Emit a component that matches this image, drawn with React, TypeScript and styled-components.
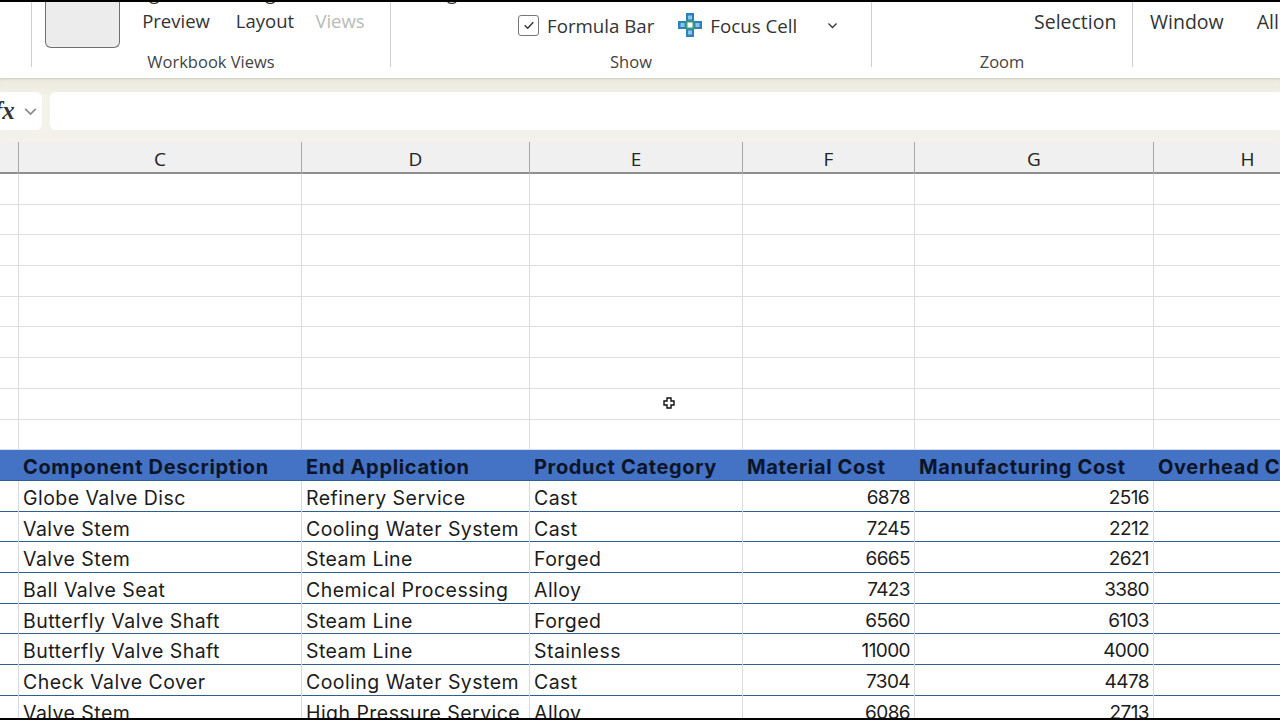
import React from 'react';
import styled, { createGlobalStyle } from 'styled-components';

const Global = createGlobalStyle`
html, body { margin: 0; padding: 0; background: #fff; }
#root { width: 1280px; height: 720px; overflow: hidden; }
`

const COLS = '19px 283px 228px 213px 172px 239px 188px'
const UI_FONT = '"Open Sans", "Noto Sans", sans-serif'
const CELL_FONT = 'Inter, "Noto Sans", sans-serif'

const Page = styled.div`
position: relative;
width: 1280px;
height: 720px;
display: flex;
flex-direction: column;
overflow: hidden;
background: #fff;
`

const EdgeBar = styled.div`
height: 2px;
flex: none;
background: #000;
`

const Ribbon = styled.div`
height: 76px;
flex: none;
display: grid;
grid-template-columns: 32px 359px 481px 261px 1fr;
background: #fff;
overflow: hidden;
font-family: ${UI_FONT};
color: #333;
`

const Group = styled.div<{ $last?: boolean }>`
display: flex;
flex-direction: column;
height: 65px;
border-right: ${(p) => (p.$last ? 'none' : '1px solid #cfcfcf')};
`

const GroupBody = styled.div<{ $left: number }>`
flex: 1;
display: flex;
align-items: flex-start;
padding-left: ${(p) => p.$left}px;
min-width: 0;
`

const GroupLabel = styled.div`
height: 20px;
margin-bottom: -5px;
text-align: center;
font-size: 16.5px;
line-height: 20px;
color: #444;
`

const Tile = styled.div`
width: 73px;
height: 45px;
background: #ececec;
border: 1px solid #6f6f6f;
border-top: none;
border-radius: 0 0 6px 6px;
flex: none;
`

const ViewLabel = styled.div<{ $width: number; $dim?: boolean }>`
width: ${(p) => p.$width}px;
margin-top: -23px;
flex: none;
text-align: center;
font-size: 18.5px;
line-height: 28px;
color: ${(p) => (p.$dim ? '#b9b9b9' : '#333')};
white-space: nowrap;
`

const ShowItem = styled.div<{ $left?: number }>`
display: flex;
align-items: center;
gap: 8px;
height: 28px;
margin-top: 9px;
margin-left: ${(p) => p.$left ?? 0}px;
font-size: 18.7px;
white-space: nowrap;
`

// sits left of the row without taking any room in it
const ClippedLabel = styled.div<{ $offset: number }>`
margin-top: -23px;
margin-left: ${(p) => -p.$offset}px;
margin-right: ${(p) => p.$offset}px;
width: 0;
font-size: 18.5px;
line-height: 28px;
white-space: nowrap;
`

const CheckBox = styled.span`
width: 21px;
height: 21px;
box-sizing: border-box;
border: 1.5px solid #777;
border-radius: 3px;
display: flex;
align-items: center;
justify-content: center;
`

const RightLabel = styled.div<{ $left: number }>`
margin-top: 10px;
margin-left: ${(p) => p.$left}px;
font-size: 19.5px;
line-height: 20px;
white-space: nowrap;
`

const FormulaStrip = styled.div`
height: 64px;
flex: none;
box-sizing: border-box;
padding-top: 14px;
display: flex;
gap: 8px;
background: linear-gradient(#ebe8dc, #f5f3ea 30%, #f3f1e9);
box-shadow: inset 0 2px 2px -1px #cfcdc4;
`

const FxBox = styled.div`
width: 42px;
height: 38px;
box-sizing: border-box;
flex: none;
display: flex;
align-items: center;
justify-content: space-between;
padding-right: 3px;
background: #fff;
border-radius: 0 6px 6px 0;
overflow: hidden;
`

const FxMark = styled.span`
margin-left: -6px;
font-family: "Liberation Serif", serif;
font-style: italic;
font-weight: 700;
font-size: 25px;
color: #333;
`

const FormulaInput = styled.div`
flex: 1;
height: 38px;
background: #fff;
border-radius: 6px 0 0 6px;
`

const HeaderRow = styled.div`
height: 32px;
flex: none;
box-sizing: border-box;
display: grid;
grid-template-columns: ${COLS};
background: #f0f0f0;
border-bottom: 2px solid #8f8f8f;
font-family: ${UI_FONT};
`

const ColHead = styled.div`
border-right: 1px solid #a8a8a8;
text-align: center;
font-size: 19px;
line-height: 35px;
color: #222;
`

const Sheet = styled.div`
flex: 1;
min-height: 0;
overflow: hidden;
font-family: ${CELL_FONT};
`

const Row = styled.div<{ $kind: 'blank' | 'head' | 'data' }>`
height: 30.7px;
box-sizing: border-box;
display: grid;
grid-template-columns: ${COLS};
background: ${(p) => (p.$kind === 'head' ? '#4472c4' : '#fff')};
border-bottom: 1px solid ${(p) => (p.$kind === 'blank' ? '#dedede' : '#2f5f8f')};
`

const Cell = styled.div<{ $kind: 'blank' | 'head' | 'data'; $num?: boolean }>`
box-sizing: border-box;
padding: 2px 4px 0 4px;
border-right: ${(p) => (p.$kind === 'head' ? 'none' : p.$kind === 'blank' ? '1px solid #dcdcdc' : '1px solid #d4dbe6')};
font-size: ${(p) => (p.$num ? '19px' : p.$kind === 'head' ? '20px' : '19.5px')};
letter-spacing: ${(p) => (p.$num ? '-0.6px' : p.$kind === 'head' ? '0.65px' : '0.45px')};
font-weight: ${(p) => (p.$kind === 'head' ? 700 : 400)};
line-height: 30px;
text-align: ${(p) => (p.$num ? 'right' : 'left')};
color: ${(p) => (p.$kind === 'head' ? '#0c1528' : '#1c1c1c')};
white-space: nowrap;
`

const Cursor = styled.svg`
position: absolute;
left: 663px;
top: 397px;
`

const BLANK_ROWS = 9
const HEAD = ['Component Description', 'End Application', 'Product Category', 'Material Cost', 'Manufacturing Cost', 'Overhead Cost']
const DATA: [string, string, string, string, string][] = [
    ['Globe Valve Disc', 'Refinery Service', 'Cast', '6878', '2516'],
    ['Valve Stem', 'Cooling Water System', 'Cast', '7245', '2212'],
    ['Valve Stem', 'Steam Line', 'Forged', '6665', '2621'],
    ['Ball Valve Seat', 'Chemical Processing', 'Alloy', '7423', '3380'],
    ['Butterfly Valve Shaft', 'Steam Line', 'Forged', '6560', '6103'],
    ['Butterfly Valve Shaft', 'Steam Line', 'Stainless', '11000', '4000'],
    ['Check Valve Cover', 'Cooling Water System', 'Cast', '7304', '4478'],
    ['Valve Stem', 'High Pressure Service', 'Alloy', '6086', '2713'],
]

const FocusIcon = () => (
    <svg width="24" height="24" viewBox="0 0 24 24">
        <path d="M8 0h8v8h8v8h-8v8H8v-8H0V8h8z" fill="#2f7fb8" />
        <rect x="10" y="2.5" width="4" height="4" fill="#8cc6e8" />
        <rect x="2.5" y="10" width="4" height="4" fill="#8cc6e8" />
        <rect x="17.5" y="10" width="4" height="4" fill="#8cc6e8" />
        <rect x="10" y="17.5" width="4" height="4" fill="#8cc6e8" />
        <rect x="7.5" y="7.5" width="9" height="9" fill="#3f9a7a" />
        <rect x="9.5" y="9.5" width="5" height="5" fill="#fff" />
    </svg>
)

const Chevron = ({ color, size }: { color: string; size: number }) => (
    <svg width={size} height={size} viewBox="0 0 16 16" fill="none">
        <path d="M3 5.5l5 5 5-5" stroke={color} strokeWidth="1.5" />
    </svg>
)

const App: React.FC = () => {
    return (
        <Page>
            <Global />
            <EdgeBar />
            <Ribbon>
                <Group />
                <Group>
                    <GroupBody $left={13}>
                        <Tile />
                        <ViewLabel $width={112}>Page Break<br />Preview</ViewLabel>
                        <ViewLabel $width={66}>Page<br />Layout</ViewLabel>
                        <ViewLabel $width={84} $dim>Custom<br />Views</ViewLabel>
                    </GroupBody>
                    <GroupLabel>Workbook Views</GroupLabel>
                </Group>
                <Group>
                    <GroupBody $left={127}>
                        <ClippedLabel $offset={109}>Navigation</ClippedLabel>
                        <ShowItem>
                            <CheckBox>
                                <svg width="14" height="14" viewBox="0 0 13 13" fill="none">
                                    <path d="M2.5 6.8l2.8 2.7 5.2-5.5" stroke="#333" strokeWidth="1.3" />
                                </svg>
                            </CheckBox>
                            Formula Bar
                        </ShowItem>
                        <ShowItem $left={24}>
                            <FocusIcon />
                            Focus Cell
                        </ShowItem>
                        <ShowItem $left={29}>
                            <Chevron color="#333" size={13} />
                        </ShowItem>
                    </GroupBody>
                    <GroupLabel>Show</GroupLabel>
                </Group>
                <Group>
                    <GroupBody $left={162}>
                        <RightLabel $left={0}>Selection</RightLabel>
                    </GroupBody>
                    <GroupLabel>Zoom</GroupLabel>
                </Group>
                <Group $last>
                    <GroupBody $left={17}>
                        <RightLabel $left={0}>Window</RightLabel>
                        <RightLabel $left={33}>All</RightLabel>
                    </GroupBody>
                </Group>
            </Ribbon>
            <FormulaStrip>
                <FxBox>
                    <FxMark>fx</FxMark>
                    <Chevron color="#8a8a8a" size={17} />
                </FxBox>
                <FormulaInput />
            </FormulaStrip>
            <HeaderRow>
                {['', 'C', 'D', 'E', 'F', 'G', 'H'].map((c) => <ColHead key={c}>{c}</ColHead>)}
            </HeaderRow>
            <Sheet>
                {Array.from({ length: BLANK_ROWS }, (_, i) => (
                    <Row key={i} $kind="blank">
                        {Array.from({ length: 7 }, (_, j) => <Cell key={j} $kind="blank" />)}
                    </Row>
                ))}
                <Row $kind="head">
                    <Cell $kind="head" />
                    {HEAD.map((h) => <Cell key={h} $kind="head">{h}</Cell>)}
                </Row>
                {DATA.map((d, i) => (
                    <Row key={i} $kind="data">
                        <Cell $kind="data" />
                        <Cell $kind="data">{d[0]}</Cell>
                        <Cell $kind="data">{d[1]}</Cell>
                        <Cell $kind="data">{d[2]}</Cell>
                        <Cell $kind="data" $num>{d[3]}</Cell>
                        <Cell $kind="data" $num>{d[4]}</Cell>
                        <Cell $kind="data" />
                    </Row>
                ))}
            </Sheet>
            <EdgeBar />
            <Cursor width="12" height="12" viewBox="0 0 12 12">
                <path d="M4 1h4v3h3v4H8v3H4V8H1V4h3z" fill="#fff" stroke="#111" strokeWidth="1.4" />
            </Cursor>
        </Page>
    )
}

export default App
